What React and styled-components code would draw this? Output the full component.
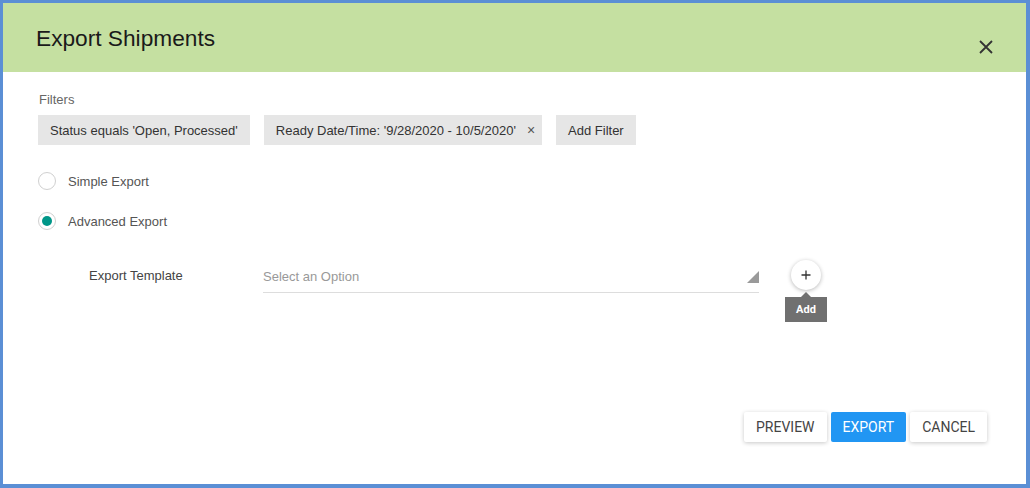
import React from 'react';
import styled, { createGlobalStyle } from 'styled-components';

const GlobalStyle = createGlobalStyle`
  html, body {
    margin: 0;
    padding: 0;
    background: #5b8fd5;
  }
  body {
    font-family: "Liberation Sans", Arial, sans-serif;
  }
`;

const Dialog = styled.div`
  margin: 3px 4px 4px 3px;
  height: 481px;
  background: #fff;
  display: flex;
  flex-direction: column;
`;

const Header = styled.div`
  height: 69px;
  background: #c5e0a1;
  display: flex;
  justify-content: space-between;
  align-items: flex-start;
  padding: 0 33px;
`;

const Title = styled.h1`
  margin: 22px 0 0;
  font-weight: normal;
  font-size: 22.7px;
  line-height: 26px;
  color: #1a1a1a;
`;

const CloseButton = styled.button`
  margin-top: 37px;
  padding: 0;
  border: none;
  background: none;
  width: 14px;
  height: 14px;
  display: flex;
  cursor: pointer;
`;

const Body = styled.div`
  flex: 1;
  display: flex;
  flex-direction: column;
  padding: 20px 35px 0;
`;

const SectionLabel = styled.div`
  font-size: 13px;
  line-height: 16px;
  color: #666;
  padding-left: 1px;
`;

const ChipRow = styled.div`
  display: flex;
  gap: 14px;
  margin-top: 7px;
`;

const Chip = styled.div`
  height: 30px;
  display: flex;
  align-items: center;
  gap: 11px;
  padding: 0 12px;
  background: #e6e6e6;
  font-size: 13px;
  color: #333;
  white-space: nowrap;
`;

const ChipClose = styled.span`
  font-size: 14px;
  color: #555;
  margin-right: -5px;
`;

const RadioGroup = styled.div`
  display: flex;
  flex-direction: column;
  gap: 16px;
  margin-top: 24px;
`;

const RadioRow = styled.label`
  height: 24px;
  display: flex;
  align-items: center;
  gap: 12px;
  font-size: 13px;
  color: #555;
`;

const RadioCircle = styled.span`
  width: 16px;
  height: 16px;
  border: 1px solid #d0d0d0;
  border-radius: 50%;
  background: #fff;
  display: flex;
  align-items: center;
  justify-content: center;

  &::after {
    content: '';
    width: 10px;
    height: 10px;
    border-radius: 50%;
    background: ${(p) => (p.$checked ? '#009688' : 'transparent')};
  }
`;

const TemplateRow = styled.div`
  display: flex;
  align-items: flex-start;
  margin-top: 28px;
  padding-left: 51px;
`;

const FieldLabel = styled.div`
  width: 174px;
  font-size: 13px;
  line-height: 30px;
  color: #444;
`;

const Select = styled.div`
  width: 496px;
  height: 31px;
  border-bottom: 1px solid #ddd;
  display: flex;
  align-items: flex-end;
  justify-content: space-between;
  font-size: 13px;
  line-height: 31px;
  color: #999;
`;

const Placeholder = styled.span`
  align-self: stretch;
`;

const Caret = styled.svg`
  margin-bottom: 9px;
  flex-shrink: 0;
`;

const AddWrap = styled.div`
  position: relative;
  margin-left: 32px;
  margin-top: -1px;
`;

const RoundButton = styled.button`
  width: 30px;
  height: 30px;
  border-radius: 50%;
  border: none;
  background: #fff;
  box-shadow: 0 1px 4px rgba(0, 0, 0, 0.28);
  display: flex;
  align-items: center;
  justify-content: center;
  padding: 0;
  cursor: pointer;
`;

const Tooltip = styled.div`
  position: absolute;
  top: 37px;
  left: 50%;
  transform: translateX(-50%);
  width: 42px;
  height: 25px;
  background: #707070;
  color: #fff;
  font-family: Roboto, sans-serif;
  font-size: 11px;
  font-weight: bold;
  display: flex;
  align-items: center;
  justify-content: center;

  &::before {
    content: '';
    position: absolute;
    top: -5px;
    left: 50%;
    margin-left: -5px;
    border-left: 5px solid transparent;
    border-right: 5px solid transparent;
    border-bottom: 5px solid #707070;
  }
`;

const Footer = styled.div`
  margin-top: auto;
  display: flex;
  justify-content: flex-end;
  gap: 4px;
  padding: 0 4px 42px 0;
`;

const Button = styled.button`
  height: 30px;
  padding: 0 12px;
  border: none;
  border-radius: 2px;
  font-family: Roboto, sans-serif;
  font-size: 14px;
  text-transform: uppercase;
  cursor: pointer;
  background: ${(p) => (p.$primary ? '#2196f3' : '#fff')};
  color: ${(p) => (p.$primary ? '#fff' : '#444')};
  box-shadow: ${(p) => (p.$primary ? 'none' : '0 1px 4px rgba(0, 0, 0, 0.22)')};
`;

const filters = [
  { label: "Status equals 'Open, Processed'", removable: false },
  { label: "Ready Date/Time: '9/28/2020 - 10/5/2020'", removable: true },
  { label: 'Add Filter', removable: false },
];

const App = () => {
  return (
    <>
      <GlobalStyle />
      <Dialog>
        <Header>
          <Title>Export Shipments</Title>
          <CloseButton aria-label="Close">
            <svg width="14" height="14" viewBox="0 0 14 14">
              <path d="M1 1 L13 13 M13 1 L1 13" stroke="#333" strokeWidth="1.8" />
            </svg>
          </CloseButton>
        </Header>
        <Body>
          <SectionLabel>Filters</SectionLabel>
          <ChipRow>
            {filters.map((f) => (
              <Chip key={f.label}>
                {f.label}
                {f.removable && <ChipClose>×</ChipClose>}
              </Chip>
            ))}
          </ChipRow>
          <RadioGroup>
            <RadioRow>
              <RadioCircle />
              Simple Export
            </RadioRow>
            <RadioRow>
              <RadioCircle $checked />
              Advanced Export
            </RadioRow>
          </RadioGroup>
          <TemplateRow>
            <FieldLabel>Export Template</FieldLabel>
            <Select>
              <Placeholder>Select an Option</Placeholder>
              <Caret width="12" height="12" viewBox="0 0 12 12">
                <polygon points="12,0 12,12 0,12" fill="#9a9a9a" />
              </Caret>
            </Select>
            <AddWrap>
              <RoundButton aria-label="Add">
                <svg width="12" height="12" viewBox="0 0 12 12">
                  <path d="M6 1.5 V10.5 M1.5 6 H10.5" stroke="#333" strokeWidth="1.3" />
                </svg>
              </RoundButton>
              <Tooltip>Add</Tooltip>
            </AddWrap>
          </TemplateRow>
          <Footer>
            <Button>Preview</Button>
            <Button $primary>Export</Button>
            <Button>Cancel</Button>
          </Footer>
        </Body>
      </Dialog>
    </>
  );
};

export default App;
